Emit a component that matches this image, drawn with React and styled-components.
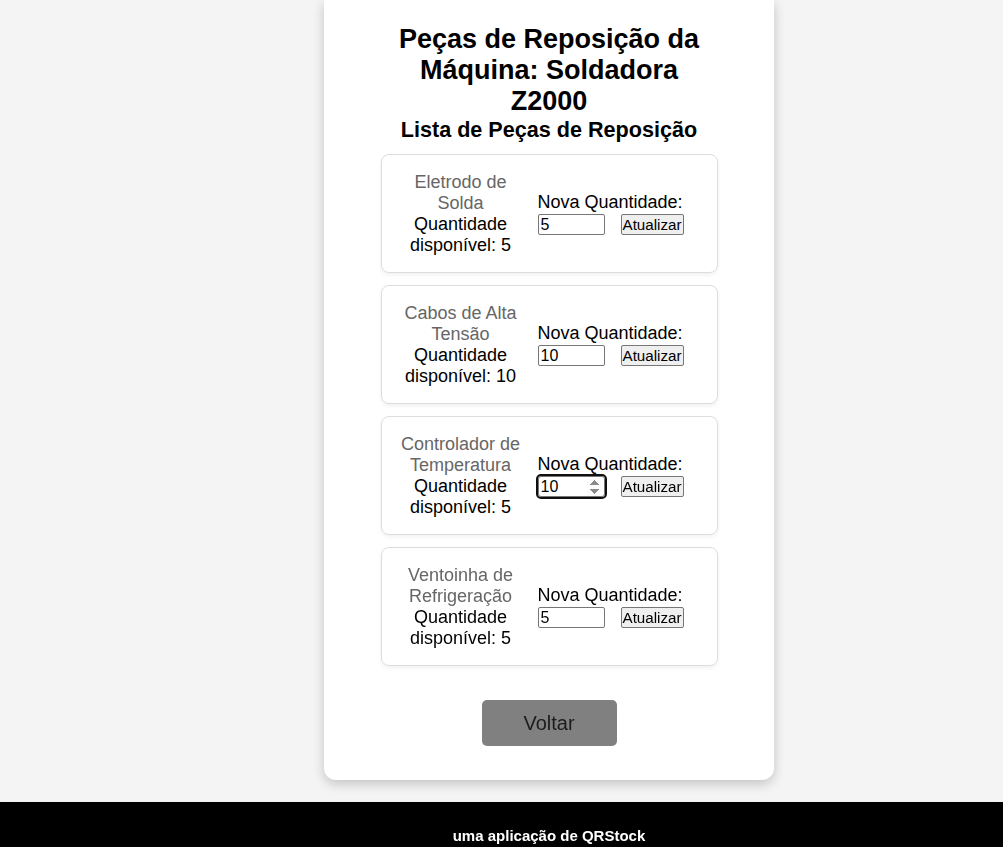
import React, { useState } from 'react';
import styled, { createGlobalStyle } from 'styled-components';

const GlobalStyle = createGlobalStyle`
  html, body {
    margin: 0;
    padding: 0;
    background: #f4f4f4;
    font-family: "Liberation Sans", Arial, sans-serif;
  }
`

const initialParts = [
    { id: 1, name: 'Eletrodo de Solda', qty: 5, value: '5' },
    { id: 2, name: 'Cabos de Alta Tensão', qty: 10, value: '10' },
    { id: 3, name: 'Controlador de Temperatura', qty: 5, value: '10', focus: true },
    { id: 4, name: 'Ventoinha de Refrigeração', qty: 5, value: '5' },
];

function App() {

    const [parts, setParts] = useState(initialParts);

    const changeValue = (id, value) => {
        setParts(parts.map((p) => (p.id === id ? { ...p, value } : p)));
    }

    const updateQty = (id) => {
        setParts(parts.map((p) => (p.id === id ? { ...p, qty: Number(p.value) } : p)));
    }

    return (
        <>
            <GlobalStyle />
            <Main>
                <Card>
                    <Title>Peças de Reposição da Máquina: Soldadora Z2000</Title>
                    <Subtitle>Lista de Peças de Reposição</Subtitle>
                    <List>
                        {parts.map((part) => (
                            <Item key={part.id}>
                                <Info>
                                    <PartName>{part.name}</PartName>
                                    <Stock>Quantidade disponível: {part.qty}</Stock>
                                </Info>
                                <Form>
                                    <label>Nova Quantidade:</label>
                                    <Row>
                                        <QtyInput
                                            type="number"
                                            value={part.value}
                                            autoFocus={part.focus}
                                            onChange={(e) => changeValue(part.id, e.target.value)}
                                        />
                                        <UpdateButton onClick={() => updateQty(part.id)}>Atualizar</UpdateButton>
                                    </Row>
                                </Form>
                            </Item>
                        ))}
                    </List>
                    <BackButton>Voltar</BackButton>
                </Card>
            </Main>
            <Footer>
                <p>uma aplicação de QRStock</p>
            </Footer>
        </>
    )
}

export default App


const Main = styled.main`
    display: flex;
    justify-content: center;
    padding: 0 0 22px 95px;
`

const Card = styled.div`
    width: 450px;
    box-sizing: border-box;
    background: #fff;
    border-radius: 0 0 12px 12px;
    box-shadow: 0 4px 12px rgba(0, 0, 0, 0.2);
    padding: 24px 0 34px;
    display: flex;
    flex-direction: column;
    align-items: center;
`

const Title = styled.h1`
    width: 337px;
    margin: 0;
    font-size: 27px;
    line-height: 31px;
    font-weight: bold;
    text-align: center;
    color: #000;
`

const Subtitle = styled.h2`
    margin: 0;
    font-size: 21.6px;
    line-height: 25px;
    font-weight: bold;
    text-align: center;
    color: #000;
`

const List = styled.div`
    width: 337px;
    margin-top: 12px;
    display: flex;
    flex-direction: column;
    gap: 12px;
`

const Item = styled.div`
    box-sizing: border-box;
    height: 119px;
    border: 1px solid #ddd;
    border-radius: 8px;
    box-shadow: 0 2px 4px rgba(0, 0, 0, 0.06);
    padding: 0 20px 0 17px;
    display: flex;
    align-items: center;
    gap: 15px;
    font-size: 18px;
    line-height: 21px;
`

const Info = styled.div`
    width: 124px;
    flex-shrink: 0;
    text-align: center;
`

const PartName = styled.div`
    color: #666;
`

const Stock = styled.div`
    color: #000;
`

const Form = styled.div`
    display: flex;
    flex-direction: column;
    color: #000;
`

const Row = styled.div`
    display: flex;
    align-items: center;
    gap: 16px;
    margin-top: 1px;
`

const QtyInput = styled.input`
    height: 21px;
    box-sizing: border-box;
    width: 67px;
    padding: 1px 2px;
    border: 1px solid #767676;
    border-radius: 2px;
    font-family: "Liberation Sans", Arial, sans-serif;
    font-size: 16px;
    color: #000;
    background: #fff;

    &:focus {
        outline: 2px solid #101010;
        outline-offset: 0;
        border-radius: 3px;
    }
`

const UpdateButton = styled.button`
    height: 21px;
    box-sizing: border-box;
    padding: 0 1px;
    border: 1px solid #767676;
    border-radius: 2px;
    background: #efefef;
    font-family: "Liberation Sans", Arial, sans-serif;
    font-size: 15.2px;
    color: #000;
    cursor: pointer;
`

const BackButton = styled.button`
    margin-top: 34px;
    width: 135px;
    height: 46px;
    border: none;
    border-radius: 5px;
    background: #808080;
    color: #1c1c1c;
    font-family: "Liberation Sans", Arial, sans-serif;
    font-size: 20px;
    cursor: pointer;

    &:hover {
        background: #707070;
    }
`

const Footer = styled.footer`
    background: #000;
    color: #fff;
    height: 60px;
    padding: 25px 0 0 95px;
    box-sizing: border-box;
    text-align: center;

    p {
        margin: 0;
        font-size: 15px;
        line-height: 18px;
        font-weight: bold;
    }
`
